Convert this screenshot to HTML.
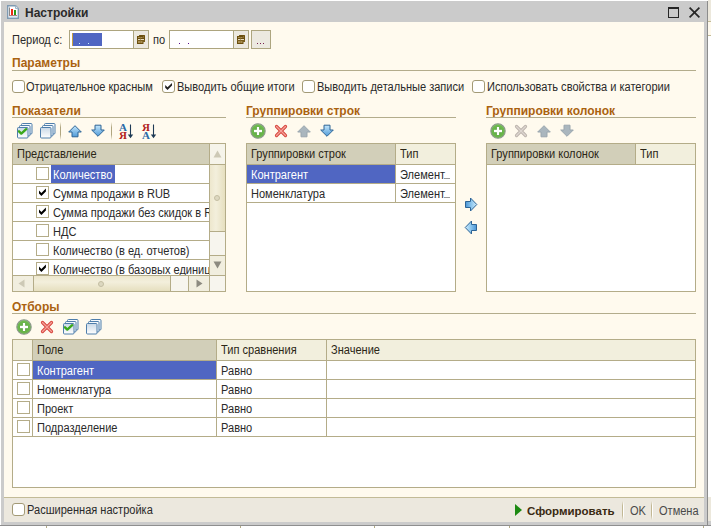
<!DOCTYPE html>
<html><head><meta charset="utf-8">
<style>
*{margin:0;padding:0;box-sizing:border-box}
html,body{width:711px;height:528px;overflow:hidden;background:#fff;font-family:"Liberation Sans",sans-serif;font-size:11px;color:#222}
.a{position:absolute}
svg.a{overflow:visible}
.t{position:absolute;white-space:nowrap;font-size:12px;line-height:13px;transform:scaleX(.92);transform-origin:0 0}
.hdr{position:absolute;white-space:nowrap;font-size:12px;font-weight:bold;color:#aa6210;line-height:13px}
.cb{position:absolute;width:13px;height:13px;border:1px solid #a39a76;border-radius:3px;background:#fff}
.sq{position:absolute;width:13px;height:13px;border:1px solid #b4ac88;background:#fff}
</style></head><body>
<div class="a" style="left:708px;top:0px;width:3px;height:22px;background:#ece8dc;"></div>
<div class="a" style="left:708px;top:21px;width:3px;height:1px;background:#c3bb97;"></div>
<div class="a" style="left:708px;top:22px;width:3px;height:14px;background:#fffaee;"></div>
<div class="a" style="left:708px;top:35px;width:3px;height:1px;background:#c3bb97;"></div>
<div class="a" style="left:708px;top:497px;width:3px;height:24px;background:#ece8dc;"></div>
<div class="a" style="left:708px;top:521px;width:3px;height:4px;background:#cbcbcb;"></div>
<div class="a" style="left:1px;top:1px;width:707px;height:524px;background:#cbcbcb;"></div>
<div class="a" style="left:707px;top:1px;width:1px;height:524px;background:#8c8c8c;"></div>
<div class="a" style="left:0px;top:525px;width:711px;height:1px;background:#8f8f8f;"></div>
<div class="hdr" style="left:25px;top:7px;color:#2a2a2a">Настройки</div>
<div class="a" style="left:4px;top:22px;width:700px;height:475px;background:#fffaee;"></div>
<div class="a" style="left:4px;top:497px;width:700px;height:1px;background:#c3bb97;"></div>
<div class="a" style="left:4px;top:498px;width:700px;height:24px;background:#ece8de;"></div>
<div class="t" style="left:12px;top:34px;color:#2a2a2a;">Период с:</div>
<div class="a" style="left:69px;top:30px;width:80px;height:19px;background:#fff;border:1px solid #ada57f;"></div>
<div class="a" style="left:72px;top:33px;width:30px;height:13px;background:#5066c2;"></div>
<div class="a" style="left:133px;top:30px;width:16px;height:19px;background:#ece9e0;border:1px solid #ada57f;"></div>
<div class="t" style="left:153px;top:34px;color:#2a2a2a;">по</div>
<div class="a" style="left:169px;top:30px;width:80px;height:19px;background:#fff;border:1px solid #ada57f;"></div>
<div class="a" style="left:233px;top:30px;width:16px;height:19px;background:#ece9e0;border:1px solid #ada57f;"></div>
<div class="a" style="left:251px;top:30px;width:20px;height:19px;background:#ece9e0;border:1px solid #ada57f;"></div>
<div class="hdr" style="left:12px;top:57px">Параметры</div>
<div class="a" style="left:12px;top:70px;width:684px;height:1px;background:#b3ac8c;"></div>
<div class="cb" style="left:12px;top:80px"></div>
<div class="t" style="left:26px;top:81px;color:#2a2a2a;">Отрицательное красным</div>
<div class="cb" style="left:162px;top:80px"><svg class="a" style="left:-1px;top:-1px" width="13" height="13" viewBox="0 0 13 13"><path d="M3.2 4.9 L5.5 7.2 L10 2.9 L10 5.6 L5.5 10 L3.2 7.7 Z" fill="#222"/></svg></div>
<div class="t" style="left:177px;top:81px;color:#2a2a2a;">Выводить общие итоги</div>
<div class="cb" style="left:302px;top:80px"></div>
<div class="t" style="left:317px;top:81px;color:#2a2a2a;">Выводить детальные записи</div>
<div class="cb" style="left:472px;top:80px"></div>
<div class="t" style="left:487px;top:81px;color:#2a2a2a;">Использовать свойства и категории</div>
<div class="hdr" style="left:12px;top:105px">Показатели</div>
<div class="a" style="left:12px;top:117px;width:214px;height:1px;background:#b3ac8c;"></div>
<div class="hdr" style="left:246px;top:105px">Группировки строк</div>
<div class="a" style="left:246px;top:117px;width:210px;height:1px;background:#b3ac8c;"></div>
<div class="hdr" style="left:486px;top:105px">Группировки колонок</div>
<div class="a" style="left:486px;top:117px;width:210px;height:1px;background:#b3ac8c;"></div>
<div class="a" style="left:12px;top:143px;width:214px;height:149px;background:#fff;border:1px solid #b4ac88;"></div>
<div class="a" style="left:13px;top:144px;width:196px;height:20px;background:#d2cfb9;"></div>
<div class="a" style="left:13px;top:164px;width:196px;height:1px;background:#b4ac88;"></div>
<div class="t" style="left:17px;top:148px;color:#2b2616;">Представление</div>
<div class="a" style="left:13px;top:183px;width:196px;height:1px;background:#b4ac88;"></div>
<div class="a" style="left:13px;top:202px;width:196px;height:1px;background:#b4ac88;"></div>
<div class="a" style="left:13px;top:221px;width:196px;height:1px;background:#b4ac88;"></div>
<div class="a" style="left:13px;top:240px;width:196px;height:1px;background:#b4ac88;"></div>
<div class="a" style="left:13px;top:259px;width:196px;height:1px;background:#b4ac88;"></div>
<div class="sq" style="left:36px;top:167px"></div>
<div class="a" style="left:51px;top:165px;width:64px;height:18px;background:#5066c2;"></div>
<div class="t" style="left:53px;top:169px;color:#fff;">Количество</div>
<div class="sq" style="left:36px;top:186px"><svg class="a" style="left:-1px;top:-1px" width="13" height="13" viewBox="0 0 13 13"><path d="M3 4.6 L5.4 7 L9.9 2.5 L9.9 5.4 L5.4 9.9 L3 7.5 Z" fill="#000"/></svg></div>
<div class="a" style="left:51px;top:184px;width:158px;height:18px;overflow:hidden"><div class="t" style="left:2px;top:4px;color:#2a2a2a">Сумма продажи в RUB</div></div>
<div class="sq" style="left:36px;top:205px"><svg class="a" style="left:-1px;top:-1px" width="13" height="13" viewBox="0 0 13 13"><path d="M3 4.6 L5.4 7 L9.9 2.5 L9.9 5.4 L5.4 9.9 L3 7.5 Z" fill="#000"/></svg></div>
<div class="a" style="left:51px;top:203px;width:158px;height:18px;overflow:hidden"><div class="t" style="left:2px;top:4px;color:#2a2a2a">Сумма продажи без скидок в RUB</div></div>
<div class="sq" style="left:36px;top:224px"></div>
<div class="a" style="left:51px;top:222px;width:158px;height:18px;overflow:hidden"><div class="t" style="left:2px;top:4px;color:#2a2a2a">НДС</div></div>
<div class="sq" style="left:36px;top:243px"></div>
<div class="a" style="left:51px;top:241px;width:158px;height:18px;overflow:hidden"><div class="t" style="left:2px;top:4px;color:#2a2a2a">Количество (в ед. отчетов)</div></div>
<div class="sq" style="left:36px;top:262px"><svg class="a" style="left:-1px;top:-1px" width="13" height="13" viewBox="0 0 13 13"><path d="M3 4.6 L5.4 7 L9.9 2.5 L9.9 5.4 L5.4 9.9 L3 7.5 Z" fill="#000"/></svg></div>
<div class="a" style="left:51px;top:260px;width:158px;height:15px;overflow:hidden"><div class="t" style="left:2px;top:4px;color:#2a2a2a">Количество (в базовых единицах)</div></div>
<div class="a" style="left:209px;top:144px;width:1px;height:147px;background:#b4ac88;"></div>
<div class="a" style="left:210px;top:144px;width:15px;height:20px;background:#f6f4ea;"></div>
<div class="a" style="left:210px;top:164px;width:15px;height:1px;background:#b4ac88;"></div>
<div class="a" style="left:210px;top:165px;width:15px;height:66px;background:linear-gradient(90deg,#ede7cd,#f3efdc 40%,#e6dfbf);"></div>
<div class="a" style="left:210px;top:231px;width:15px;height:1px;background:#b4ac88;"></div>
<div class="a" style="left:210px;top:232px;width:15px;height:23px;background:#f7f5ee;"></div>
<div class="a" style="left:210px;top:255px;width:15px;height:1px;background:#b4ac88;"></div>
<div class="a" style="left:210px;top:256px;width:15px;height:19px;background:#f1eedf;"></div>
<div class="a" style="left:210px;top:275px;width:15px;height:1px;background:#b4ac88;"></div>
<div class="a" style="left:210px;top:276px;width:15px;height:15px;background:#f7f5ee;"></div>
<div class="a" style="left:13px;top:275px;width:196px;height:1px;background:#b4ac88;"></div>
<div class="a" style="left:13px;top:276px;width:20px;height:15px;background:#f1eedf;"></div>
<div class="a" style="left:33px;top:276px;width:1px;height:15px;background:#b4ac88;"></div>
<div class="a" style="left:34px;top:276px;width:136px;height:15px;background:linear-gradient(180deg,#ede7cd,#f3efdc 40%,#e6dfbf);"></div>
<div class="a" style="left:170px;top:276px;width:1px;height:15px;background:#b4ac88;"></div>
<div class="a" style="left:171px;top:276px;width:17px;height:15px;background:#f7f5ee;"></div>
<div class="a" style="left:188px;top:276px;width:1px;height:15px;background:#b4ac88;"></div>
<div class="a" style="left:189px;top:276px;width:20px;height:15px;background:#f1eedf;"></div>
<div class="a" style="left:246px;top:143px;width:210px;height:149px;background:#fff;border:1px solid #b4ac88;"></div>
<div class="a" style="left:247px;top:144px;width:148px;height:20px;background:#d2cfb9;"></div>
<div class="a" style="left:396px;top:144px;width:59px;height:20px;background:#f2efdd;"></div>
<div class="a" style="left:395px;top:144px;width:1px;height:58px;background:#b4ac88;"></div>
<div class="a" style="left:247px;top:164px;width:208px;height:1px;background:#b4ac88;"></div>
<div class="a" style="left:247px;top:183px;width:208px;height:1px;background:#b4ac88;"></div>
<div class="a" style="left:247px;top:202px;width:208px;height:1px;background:#b4ac88;"></div>
<div class="t" style="left:251px;top:148px;color:#2b2616;">Группировки строк</div>
<div class="t" style="left:400px;top:148px;color:#2b2616;">Тип</div>
<div class="a" style="left:247px;top:165px;width:148px;height:18px;background:#5066c2;"></div>
<div class="t" style="left:251px;top:169px;color:#fff;">Контрагент</div>
<div class="t" style="left:400px;top:169px;color:#2a2a2a;">Элемент</div>
<div class="a" style="left:444px;top:178px;width:6px;height:1px;background:#9a9a9a;"></div>
<div class="t" style="left:251px;top:188px;color:#2a2a2a;">Номенклатура</div>
<div class="t" style="left:400px;top:188px;color:#2a2a2a;">Элемент</div>
<div class="a" style="left:444px;top:197px;width:6px;height:1px;background:#9a9a9a;"></div>
<div class="a" style="left:486px;top:143px;width:210px;height:149px;background:#fff;border:1px solid #b4ac88;"></div>
<div class="a" style="left:487px;top:144px;width:148px;height:20px;background:#d2cfb9;"></div>
<div class="a" style="left:636px;top:144px;width:59px;height:20px;background:#f2efdd;"></div>
<div class="a" style="left:635px;top:144px;width:1px;height:20px;background:#b4ac88;"></div>
<div class="a" style="left:487px;top:164px;width:208px;height:1px;background:#b4ac88;"></div>
<div class="t" style="left:491px;top:148px;color:#2b2616;">Группировки колонок</div>
<div class="t" style="left:640px;top:148px;color:#2b2616;">Тип</div>
<div class="hdr" style="left:12px;top:301px">Отборы</div>
<div class="a" style="left:12px;top:313px;width:684px;height:1px;background:#b3ac8c;"></div>
<div class="a" style="left:12px;top:339px;width:684px;height:149px;background:#fff;border:1px solid #b4ac88;"></div>
<div class="a" style="left:13px;top:340px;width:19px;height:20px;background:#f2efdd;"></div>
<div class="a" style="left:33px;top:340px;width:183px;height:20px;background:#d2cfb9;"></div>
<div class="a" style="left:217px;top:340px;width:478px;height:20px;background:#f2efdd;"></div>
<div class="a" style="left:32px;top:340px;width:1px;height:96px;background:#b4ac88;"></div>
<div class="a" style="left:216px;top:340px;width:1px;height:96px;background:#b4ac88;"></div>
<div class="a" style="left:326px;top:340px;width:1px;height:96px;background:#b4ac88;"></div>
<div class="a" style="left:13px;top:360px;width:682px;height:1px;background:#b4ac88;"></div>
<div class="a" style="left:13px;top:379px;width:682px;height:1px;background:#b4ac88;"></div>
<div class="a" style="left:13px;top:398px;width:682px;height:1px;background:#b4ac88;"></div>
<div class="a" style="left:13px;top:417px;width:682px;height:1px;background:#b4ac88;"></div>
<div class="a" style="left:13px;top:436px;width:682px;height:1px;background:#b4ac88;"></div>
<div class="t" style="left:37px;top:344px;color:#2b2616;">Поле</div>
<div class="t" style="left:221px;top:344px;color:#2b2616;">Тип сравнения</div>
<div class="t" style="left:331px;top:344px;color:#2b2616;">Значение</div>
<div class="sq" style="left:17px;top:363px"></div>
<div class="a" style="left:33px;top:361px;width:183px;height:18px;background:#5066c2;"></div>
<div class="t" style="left:37px;top:365px;color:#fff;">Контрагент</div>
<div class="t" style="left:221px;top:365px;color:#2a2a2a;">Равно</div>
<div class="sq" style="left:17px;top:382px"></div>
<div class="t" style="left:37px;top:384px;color:#2a2a2a;">Номенклатура</div>
<div class="t" style="left:221px;top:384px;color:#2a2a2a;">Равно</div>
<div class="sq" style="left:17px;top:401px"></div>
<div class="t" style="left:37px;top:403px;color:#2a2a2a;">Проект</div>
<div class="t" style="left:221px;top:403px;color:#2a2a2a;">Равно</div>
<div class="sq" style="left:17px;top:420px"></div>
<div class="t" style="left:37px;top:422px;color:#2a2a2a;">Подразделение</div>
<div class="t" style="left:221px;top:422px;color:#2a2a2a;">Равно</div>
<div class="cb" style="left:12px;top:503px"></div>
<div class="t" style="left:27px;top:504px;color:#2a2a2a;">Расширенная настройка</div>
<div class="hdr" style="left:527px;top:505px;font-size:11.5px;color:#3a2a12">Сформировать</div>
<div class="t" style="left:630px;top:505px;color:#4a4a4a;">OK</div>
<div class="t" style="left:659px;top:505px;color:#4a4a4a;">Отмена</div>
<svg width="0" height="0" style="position:absolute"><defs>
<linearGradient id="gb" x1="0" y1="0" x2="0" y2="1"><stop offset="0" stop-color="#c4e6fb"/><stop offset="1" stop-color="#4e9ad8"/></linearGradient>
<linearGradient id="gbh" x1="0" y1="0" x2="1" y2="0"><stop offset="0" stop-color="#4a94d4"/><stop offset=".5" stop-color="#8cc6ee"/><stop offset="1" stop-color="#d0ecfc"/></linearGradient>
<linearGradient id="gbh2" x1="1" y1="0" x2="0" y2="0"><stop offset="0" stop-color="#4a94d4"/><stop offset=".5" stop-color="#8cc6ee"/><stop offset="1" stop-color="#d0ecfc"/></linearGradient>
<linearGradient id="gbu" x1="0" y1="1" x2="0" y2="0"><stop offset="0" stop-color="#3f8fd2"/><stop offset="1" stop-color="#b9def7"/></linearGradient>
<radialGradient id="gg" cx=".5" cy=".55" r=".6"><stop offset="0" stop-color="#5aa83c"/><stop offset=".75" stop-color="#6fba50"/><stop offset="1" stop-color="#b4dca0"/></radialGradient>
<linearGradient id="gs" x1="0" y1="0" x2="0" y2="1"><stop offset="0" stop-color="#c9d8e6"/><stop offset="1" stop-color="#ffffff"/></linearGradient>
</defs></svg>
<svg class="a" style="left:7px;top:5px" width="12" height="14" viewBox="0 0 12 14"><path d="M0.7 0.7 H8.5 L11.3 3.5 V13.3 H0.7 Z" fill="#fff" stroke="#7f9ab2" stroke-width="1.4"/><path d="M8.5 0.7 V3.5 H11.3" fill="#dfe9f2" stroke="#9fb6c8" stroke-width="1"/><rect x="2" y="2.5" width="1" height="8" fill="#8a8a8a"/><rect x="4" y="4" width="2" height="6" fill="#ee2a16"/><rect x="7" y="5" width="2" height="5" fill="#2a9a18"/><rect x="2" y="10" width="8" height="1" fill="#b08080"/><rect x="2" y="11.5" width="8" height="1" fill="#b8d4ea"/></svg>
<div class="a" style="left:668px;top:7px;width:11px;height:11px;border:1px solid #262626;border-top-width:2px"></div>
<svg class="a" style="left:689px;top:7px" width="11" height="11" viewBox="0 0 11 11"><path d="M0.6 0.6 L10.4 10.4 M10.4 0.6 L0.6 10.4" stroke="#262626" stroke-width="1.7"/></svg>
<svg class="a" style="left:137px;top:35px" width="9" height="10" viewBox="0 0 9 10"><rect x="2" y="0" width="6" height="7" fill="#a88e52"/><rect x="0" y="1" width="6" height="8" fill="#a88e52"/><path d="M2.5 1 V0.5 H7.5 V6.5 H6.5" fill="none" stroke="#6a4e0e" stroke-width="1"/><rect x="0.5" y="1.5" width="5.5" height="7" fill="none" stroke="#6a4e0e" stroke-width="1"/><rect x="0" y="3" width="8" height="1" fill="#6a4e0e"/><rect x="1" y="4" width="6" height="1" fill="#e8dcc0"/><rect x="0" y="5" width="8" height="1" fill="#7a5e1e"/><rect x="3" y="2" width="1" height="6" fill="#8a7030" opacity=".6"/></svg>
<svg class="a" style="left:237px;top:35px" width="9" height="10" viewBox="0 0 9 10"><rect x="2" y="0" width="6" height="7" fill="#a88e52"/><rect x="0" y="1" width="6" height="8" fill="#a88e52"/><path d="M2.5 1 V0.5 H7.5 V6.5 H6.5" fill="none" stroke="#6a4e0e" stroke-width="1"/><rect x="0.5" y="1.5" width="5.5" height="7" fill="none" stroke="#6a4e0e" stroke-width="1"/><rect x="0" y="3" width="8" height="1" fill="#6a4e0e"/><rect x="1" y="4" width="6" height="1" fill="#e8dcc0"/><rect x="0" y="5" width="8" height="1" fill="#7a5e1e"/><rect x="3" y="2" width="1" height="6" fill="#8a7030" opacity=".6"/></svg>
<div class="a" style="left:79px;top:43px;width:1px;height:1px;background:#c8f0ff;"></div>
<div class="a" style="left:88px;top:43px;width:1px;height:1px;background:#c8f0ff;"></div>
<div class="a" style="left:72px;top:33px;width:1px;height:13px;background:#c8a040;"></div>
<div class="a" style="left:179px;top:43px;width:1px;height:1px;background:#5a0a8a;"></div>
<div class="a" style="left:188px;top:43px;width:1px;height:1px;background:#5a0a8a;"></div>
<div class="a" style="left:257px;top:43px;width:1px;height:1px;background:#7a2050;"></div>
<div class="a" style="left:260px;top:43px;width:1px;height:1px;background:#7a2050;"></div>
<div class="a" style="left:263px;top:43px;width:1px;height:1px;background:#7a2050;"></div>
<svg class="a" style="left:17px;top:123px" width="16" height="16" viewBox="0 0 16 16"><rect x="4.5" y="0.5" width="10.5" height="10.5" rx="1" fill="#f4f8fb" stroke="#4f7eab" stroke-width="1"/><rect x="2.5" y="2.5" width="10.5" height="10.5" rx="1" fill="#f4f8fb" stroke="#4f7eab" stroke-width="1"/><rect x="0.5" y="4.5" width="10.5" height="10.5" rx="1" fill="url(#gs)" stroke="#4f7eab" stroke-width="1"/><path d="M2 8.3 L4.3 10.6 L9.2 6.2" stroke="#3aa81c" stroke-width="2.4" fill="none" stroke-linecap="round" stroke-linejoin="round"/></svg>
<svg class="a" style="left:40px;top:123px" width="16" height="16" viewBox="0 0 16 16"><rect x="4.5" y="0.5" width="10.5" height="10.5" rx="1" fill="#f4f8fb" stroke="#4f7eab" stroke-width="1"/><rect x="2.5" y="2.5" width="10.5" height="10.5" rx="1" fill="#f4f8fb" stroke="#4f7eab" stroke-width="1"/><rect x="0.5" y="4.5" width="10.5" height="10.5" rx="1" fill="url(#gs)" stroke="#4f7eab" stroke-width="1"/></svg>
<svg class="a" style="left:63px;top:319px" width="16" height="16" viewBox="0 0 16 16"><rect x="4.5" y="0.5" width="10.5" height="10.5" rx="1" fill="#f4f8fb" stroke="#4f7eab" stroke-width="1"/><rect x="2.5" y="2.5" width="10.5" height="10.5" rx="1" fill="#f4f8fb" stroke="#4f7eab" stroke-width="1"/><rect x="0.5" y="4.5" width="10.5" height="10.5" rx="1" fill="url(#gs)" stroke="#4f7eab" stroke-width="1"/><path d="M2 8.3 L4.3 10.6 L9.2 6.2" stroke="#3aa81c" stroke-width="2.4" fill="none" stroke-linecap="round" stroke-linejoin="round"/></svg>
<svg class="a" style="left:86px;top:319px" width="16" height="16" viewBox="0 0 16 16"><rect x="4.5" y="0.5" width="10.5" height="10.5" rx="1" fill="#f4f8fb" stroke="#4f7eab" stroke-width="1"/><rect x="2.5" y="2.5" width="10.5" height="10.5" rx="1" fill="#f4f8fb" stroke="#4f7eab" stroke-width="1"/><rect x="0.5" y="4.5" width="10.5" height="10.5" rx="1" fill="url(#gs)" stroke="#4f7eab" stroke-width="1"/></svg>
<div class="a" style="left:60px;top:122px;width:1px;height:18px;background:linear-gradient(180deg,rgba(180,170,130,0),#b0a680 30%,#b0a680 70%,rgba(180,170,130,0));"></div>
<div class="a" style="left:111px;top:122px;width:1px;height:18px;background:linear-gradient(180deg,rgba(180,170,130,0),#b0a680 30%,#b0a680 70%,rgba(180,170,130,0));"></div>
<svg class="a" style="left:68px;top:125px" width="14" height="13" viewBox="0 0 14 13"><path d="M7 0.7 L13.3 7 H10 V11.8 H4 V7 H0.7 Z" fill="url(#gb)" stroke="#2d6496" stroke-width="1" stroke-linejoin="round"/></svg>
<svg class="a" style="left:91px;top:124px" width="14" height="13" viewBox="0 0 14 13"><path d="M7 12.3 L13.3 6 H10 V1.2 H4 V6 H0.7 Z" fill="url(#gb)" stroke="#2d6496" stroke-width="1" stroke-linejoin="round"/></svg>
<svg class="a" style="left:297px;top:125px" width="14" height="13" viewBox="0 0 14 13"><path d="M7 0.7 L13.3 7 H10 V11.8 H4 V7 H0.7 Z" fill="#aab6be" stroke="#9aa6ae" stroke-width="1" stroke-linejoin="round"/></svg>
<svg class="a" style="left:320px;top:124px" width="14" height="13" viewBox="0 0 14 13"><path d="M7 12.3 L13.3 6 H10 V1.2 H4 V6 H0.7 Z" fill="url(#gb)" stroke="#2d6496" stroke-width="1" stroke-linejoin="round"/></svg>
<svg class="a" style="left:537px;top:125px" width="14" height="13" viewBox="0 0 14 13"><path d="M7 0.7 L13.3 7 H10 V11.8 H4 V7 H0.7 Z" fill="#aab6be" stroke="#9aa6ae" stroke-width="1" stroke-linejoin="round"/></svg>
<svg class="a" style="left:560px;top:124px" width="14" height="13" viewBox="0 0 14 13"><path d="M7 12.3 L13.3 6 H10 V1.2 H4 V6 H0.7 Z" fill="#aab6be" stroke="#9aa6ae" stroke-width="1" stroke-linejoin="round"/></svg>
<div class="a" style="left:119px;top:122px;font-family:&quot;Liberation Serif&quot;,serif;font-weight:bold;font-size:11px;line-height:10px;color:#2a6aa8">A</div>
<div class="a" style="left:119px;top:130px;font-family:&quot;Liberation Serif&quot;,serif;font-weight:bold;font-size:11px;line-height:10px;color:#b01c1c">Я</div>
<svg class="a" style="left:127px;top:124px" width="7" height="15" viewBox="0 0 7 15"><path d="M3.5 0.5 V13" stroke="#1e3a55" stroke-width="1.1"/><path d="M0.8 10.5 L3.5 14.2 L6.2 10.5 Z" fill="#1e3a55"/></svg>
<div class="a" style="left:142px;top:122px;font-family:&quot;Liberation Serif&quot;,serif;font-weight:bold;font-size:11px;line-height:10px;color:#b01c1c">Я</div>
<div class="a" style="left:142px;top:130px;font-family:&quot;Liberation Serif&quot;,serif;font-weight:bold;font-size:11px;line-height:10px;color:#2a6aa8">A</div>
<svg class="a" style="left:150px;top:124px" width="7" height="15" viewBox="0 0 7 15"><path d="M3.5 0.5 V13" stroke="#1e3a55" stroke-width="1.1"/><path d="M0.8 10.5 L3.5 14.2 L6.2 10.5 Z" fill="#1e3a55"/></svg>
<svg class="a" style="left:250px;top:123px" width="16" height="16" viewBox="0 0 16 16"><circle cx="8" cy="8" r="7.2" fill="url(#gg)" stroke="#8a968a" stroke-width="1.1"/><path d="M8 4 V12 M4 8 H12" stroke="#2e7a1e" stroke-width="3.4" opacity=".35"/><path d="M8 4 V12 M4 8 H12" stroke="#fff" stroke-width="2.3"/></svg>
<svg class="a" style="left:490px;top:123px" width="16" height="16" viewBox="0 0 16 16"><circle cx="8" cy="8" r="7.2" fill="url(#gg)" stroke="#8a968a" stroke-width="1.1"/><path d="M8 4 V12 M4 8 H12" stroke="#2e7a1e" stroke-width="3.4" opacity=".35"/><path d="M8 4 V12 M4 8 H12" stroke="#fff" stroke-width="2.3"/></svg>
<svg class="a" style="left:16px;top:319px" width="16" height="16" viewBox="0 0 16 16"><circle cx="8" cy="8" r="7.2" fill="url(#gg)" stroke="#8a968a" stroke-width="1.1"/><path d="M8 4 V12 M4 8 H12" stroke="#2e7a1e" stroke-width="3.4" opacity=".35"/><path d="M8 4 V12 M4 8 H12" stroke="#fff" stroke-width="2.3"/></svg>
<svg class="a" style="left:275px;top:125px" width="12" height="12" viewBox="0 0 12 12"><path d="M1.5 1.5 L10.5 10.5 M10.5 1.5 L1.5 10.5" stroke="#d6423a" stroke-width="3.2" stroke-linecap="round"/><path d="M1.5 1.5 L10.5 10.5 M10.5 1.5 L1.5 10.5" stroke="#f5a29a" stroke-width="1.4" stroke-linecap="round"/></svg>
<svg class="a" style="left:515px;top:125px" width="12" height="12" viewBox="0 0 12 12"><path d="M1.5 1.5 L10.5 10.5 M10.5 1.5 L1.5 10.5" stroke="#bcb4ac" stroke-width="3.2" stroke-linecap="round"/><path d="M1.5 1.5 L10.5 10.5 M10.5 1.5 L1.5 10.5" stroke="#ddd6d0" stroke-width="1.4" stroke-linecap="round"/></svg>
<svg class="a" style="left:41px;top:321px" width="12" height="12" viewBox="0 0 12 12"><path d="M1.5 1.5 L10.5 10.5 M10.5 1.5 L1.5 10.5" stroke="#d6423a" stroke-width="3.2" stroke-linecap="round"/><path d="M1.5 1.5 L10.5 10.5 M10.5 1.5 L1.5 10.5" stroke="#f5a29a" stroke-width="1.4" stroke-linecap="round"/></svg>
<svg class="a" style="left:464px;top:197px" width="14" height="15" viewBox="0 0 14 15"><path d="M1.5 4.5 H6.5 V1 L12.8 7.5 L6.5 14 V10.5 H1.5 Z" fill="url(#gbh)" stroke="#2d6496" stroke-width="1" stroke-linejoin="round"/></svg>
<svg class="a" style="left:464px;top:220px" width="14" height="15" viewBox="0 0 14 15"><path d="M12.5 4.5 H7.5 V1 L1.2 7.5 L7.5 14 V10.5 H12.5 Z" fill="url(#gbh2)" stroke="#2d6496" stroke-width="1" stroke-linejoin="round"/></svg>
<svg class="a" style="left:212px;top:148px" width="11" height="12" viewBox="0 0 11 12"><path d="M1.5 9.5 L5.5 2.5 L9.5 9.5 Z" fill="#cdc9b6"/></svg>
<svg class="a" style="left:212px;top:259px" width="11" height="12" viewBox="0 0 11 12"><path d="M1.5 2.5 L5.5 9.5 L9.5 2.5 Z" fill="#8c8a80"/></svg>
<svg class="a" style="left:16px;top:277px" width="12" height="13" viewBox="0 0 12 13"><path d="M8.5 2.5 L2.5 6.5 L8.5 10.5 Z" fill="#cdc9b6"/></svg>
<svg class="a" style="left:193px;top:277px" width="12" height="13" viewBox="0 0 12 13"><path d="M3.5 2.5 L9.5 6.5 L3.5 10.5 Z" fill="#8c8a80"/></svg>
<svg class="a" style="left:213px;top:194px" width="8" height="8" viewBox="0 0 8 8"><circle cx="4" cy="4" r="2.5" fill="#ddd8c0" stroke="#c4bea2" stroke-width="1"/></svg>
<svg class="a" style="left:97px;top:280px" width="8" height="8" viewBox="0 0 8 8"><circle cx="4" cy="4" r="2.5" fill="#ddd8c0" stroke="#c4bea2" stroke-width="1"/></svg>
<svg class="a" style="left:514px;top:503px" width="9" height="14" viewBox="0 0 9 14"><path d="M1 1 L8 7 L1 13 Z" fill="#1d8a12"/></svg>
<div class="a" style="left:622px;top:501px;width:1px;height:19px;background:linear-gradient(180deg,rgba(190,180,150,0),#c2b894 25%,#c2b894 75%,rgba(190,180,150,0));"></div>
<div class="a" style="left:623px;top:501px;width:1px;height:19px;background:linear-gradient(180deg,rgba(255,255,255,0),#fff 25%,#fff 75%,rgba(255,255,255,0));"></div>
<div class="a" style="left:651px;top:501px;width:1px;height:19px;background:linear-gradient(180deg,rgba(190,180,150,0),#c2b894 25%,#c2b894 75%,rgba(190,180,150,0));"></div>
<div class="a" style="left:652px;top:501px;width:1px;height:19px;background:linear-gradient(180deg,rgba(255,255,255,0),#fff 25%,#fff 75%,rgba(255,255,255,0));"></div>
<div class="a" style="left:46px;top:526px;width:1px;height:2px;background:#b4ac88;"></div>
<div class="a" style="left:240px;top:526px;width:1px;height:2px;background:#b4ac88;"></div>
<div class="a" style="left:374px;top:526px;width:1px;height:2px;background:#b4ac88;"></div>
<div class="a" style="left:509px;top:526px;width:1px;height:2px;background:#b4ac88;"></div>
<div class="a" style="left:703px;top:526px;width:1px;height:2px;background:#b4ac88;"></div>
<div class="a" style="left:52px;top:526px;font-size:11px;font-weight:bold;line-height:13px;white-space:nowrap;color:#000">ООО "СТ "Колесо"</div>
<div class="a" style="left:515px;top:526px;font-size:11px;font-weight:bold;line-height:13px;white-space:nowrap;color:#000">Оо</div>
</body></html>
